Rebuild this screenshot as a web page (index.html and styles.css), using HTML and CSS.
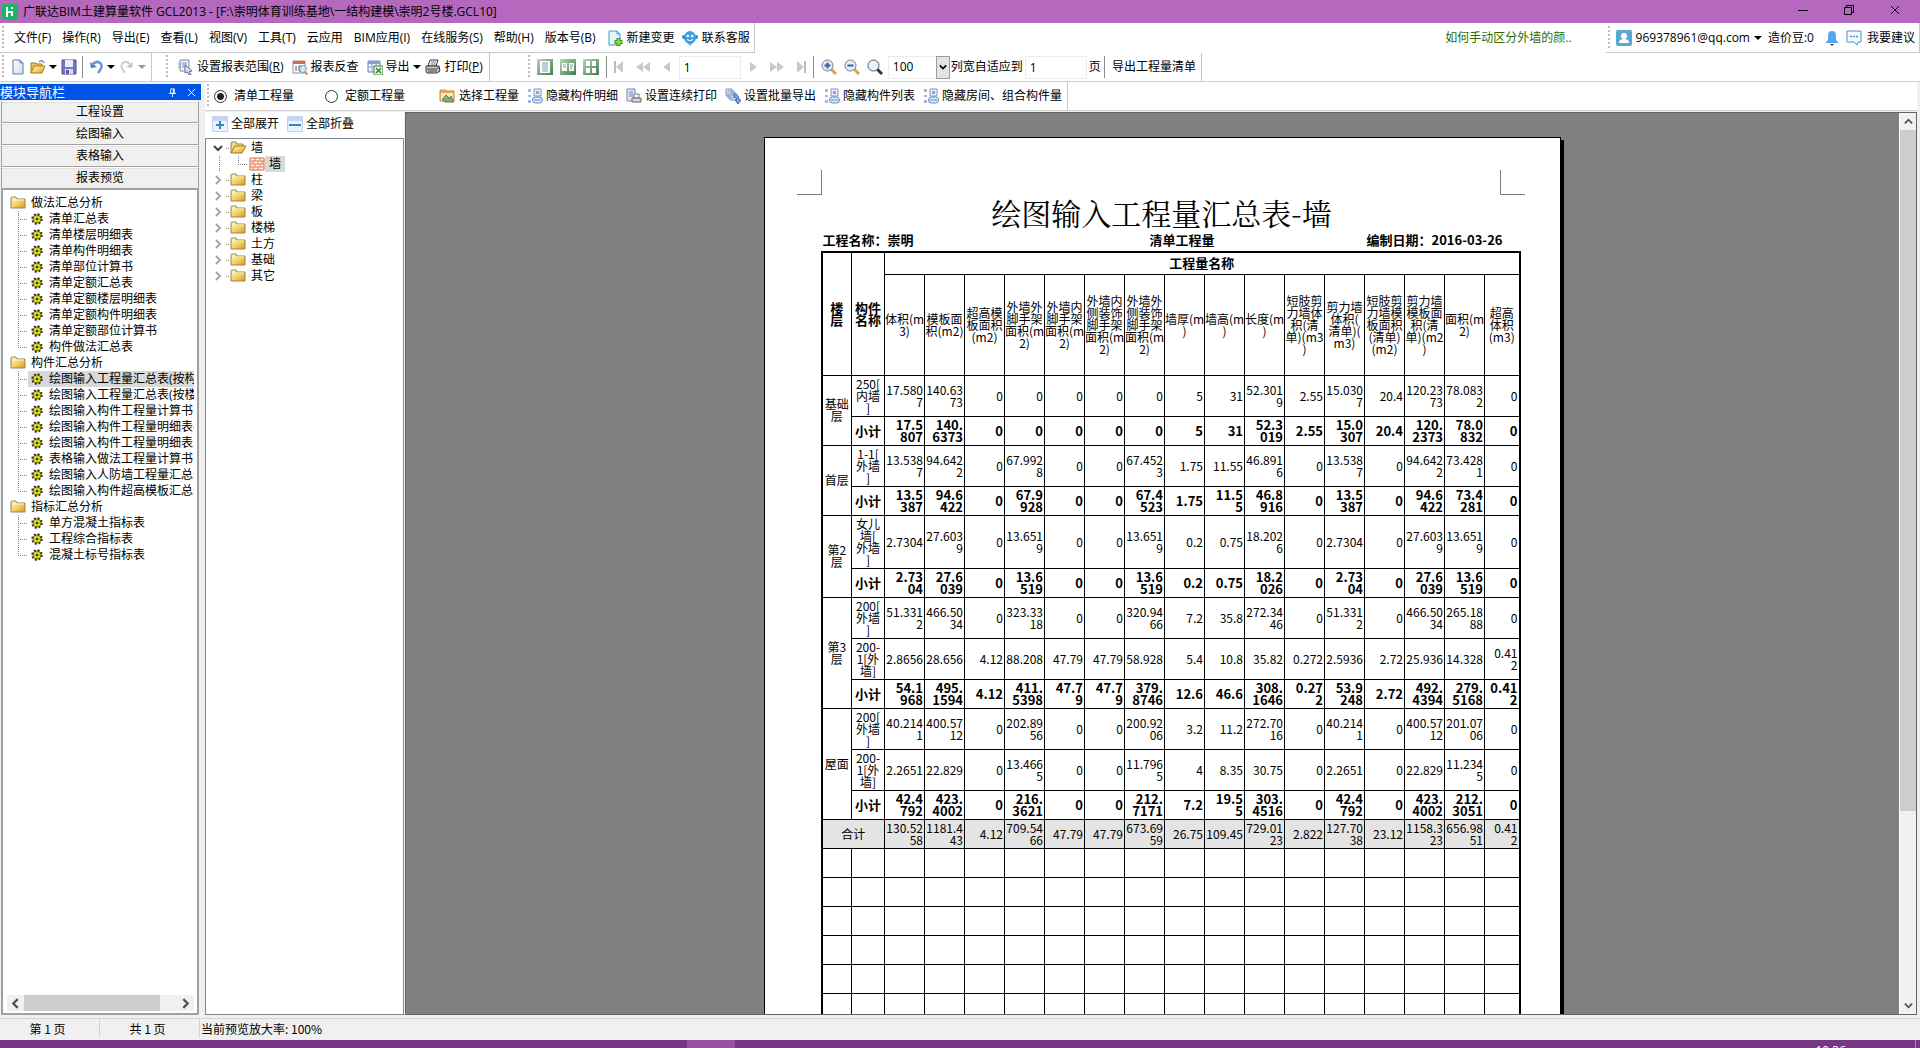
FILE: index.html
```html
<!DOCTYPE html>
<html lang="zh-CN">
<head>
<meta charset="utf-8">
<title>广联达BIM土建算量软件 GCL2013</title>
<link rel="stylesheet" href="styles.css">
</head>
<body>
<svg class="sprite" aria-hidden="true">
  <defs>
    <linearGradient id="gold" x1="0" y1="0" x2="1" y2="1"><stop offset="0" stop-color="#fff3bd"/><stop offset=".5" stop-color="#f6d36b"/><stop offset="1" stop-color="#d99a12"/></linearGradient>
    <linearGradient id="green" x1="0" y1="0" x2="1" y2="1"><stop offset="0" stop-color="#b9d6b2"/><stop offset="1" stop-color="#3f7f4b"/></linearGradient>
    <linearGradient id="sheet" x1="0" y1="0" x2="1" y2="1"><stop offset="0" stop-color="#ffffff"/><stop offset="1" stop-color="#cfdcec"/></linearGradient>
  </defs>
  <symbol id="i-logo" viewBox="0 0 16 16"><rect width="16" height="16" rx="2" fill="#1fb464"/><path d="M5 3v10M5 8h5v4M9 4h2" stroke="#fff" stroke-width="2" fill="none"/></symbol>
  <symbol id="i-new" viewBox="0 0 16 16"><path d="M3 1h7l3 3v11H3z" fill="url(#sheet)" stroke="#5d7fa8"/><path d="M10 1v3h3" fill="none" stroke="#5d7fa8"/></symbol>
  <symbol id="i-addpage" viewBox="0 0 16 16"><path d="M2 1h8l3 3v11H2z" fill="#e6f4fc" stroke="#4a9cc9"/><path d="M10 1v3h3" fill="none" stroke="#4a9cc9"/><path d="M11.500 8v8M7.500 12h8" stroke="#3d9a1c" stroke-width="4"/><path d="M11.500 9v6M8.500 12h6" stroke="#8ddc4c" stroke-width="2"/></symbol>
  <symbol id="i-open" viewBox="0 0 16 16"><path d="M1 14V4h5l1 1h5v3" fill="#e9c15c" stroke="#a97c1e"/><path d="M1 14l3-7h11l-3 7z" fill="url(#gold)" stroke="#a97c1e"/><path d="M9 3q3-3 5 1" stroke="#6c8fc0" fill="none" stroke-width="1.500"/></symbol>
  <symbol id="i-save" viewBox="0 0 16 16"><path d="M1 1h14v14H1z" fill="#7477c0" stroke="#4d4f94"/><path d="M4 1h8v7H4z" fill="#e9edfa"/><path d="M4 10h8v5H4z" fill="#d8dcee"/><path d="M5 11h3v4H5z" fill="#5a5ca4"/></symbol>
  <symbol id="i-undo" viewBox="0 0 16 16"><path d="M2 3l1 6 6-1z" fill="#4a78bd"/><path d="M4 6q4-5 8-2t-2 10" fill="none" stroke="#6795d3" stroke-width="2.500"/></symbol>
  <symbol id="i-redo" viewBox="0 0 16 16"><path d="M14 3l-1 6-6-1z" fill="#c5c5c5"/><path d="M12 6Q8 1 4 4t2 10" fill="none" stroke="#cdcdcd" stroke-width="2"/></symbol>
  <symbol id="i-drop" viewBox="0 0 8 8"><path d="M0 2h8L4 6z" fill="currentColor"/></symbol>
  <symbol id="i-range" viewBox="0 0 16 16"><path d="M3 1h9v11H3z" fill="#eef2fa" stroke="#7b8db0"/><path d="M1 5h3M1 8h3M5 4h5M5 6h5M5 8h3" stroke="#7b8db0"/><path d="M8 6l7 6-3 .5 2 3-2 .5-1.500-3L8 14z" fill="#dfe7f7" stroke="#5c6e9c"/></symbol>
  <symbol id="i-check" viewBox="0 0 16 16"><path d="M1 2h12v12H1z" fill="#fff" stroke="#909090"/><path d="M1 2h12v3H1z" fill="#e0604a"/><path d="M4 7v5M7 7h2v5H7z" stroke="#555" fill="none"/><circle cx="11" cy="10" r="3.500" fill="#cfeaf8" fill-opacity=".8" stroke="#6aa8c9"/><path d="M13 13l2.500 2.500" stroke="#d88a2a" stroke-width="2"/></symbol>
  <symbol id="i-export" viewBox="0 0 16 16"><path d="M1 2h12v11H1z" fill="#e8f0fa" stroke="#6484b4"/><path d="M1 2h12v3H1z" fill="#7da0d6"/><path d="M1 8h12M5 5v8M9 5v8" stroke="#8ca6cc"/><path d="M7 7h9v9H7z" fill="#e7f5e3" stroke="#3c8a3a"/><path d="M9 9l5 5M14 9l-5 5" stroke="#2f8a2f" stroke-width="1.500"/></symbol>
  <symbol id="i-print" viewBox="0 0 16 16"><path d="M5 1h8l-2 6H3z" fill="#fff" stroke="#333"/><path d="M6 3h5M5.500 5h5" stroke="#777"/><path d="M1 7h13l1 5-3 2H2l-1-2z" fill="#c9c9c9" stroke="#333"/><path d="M2 10h10M12 9h2M3 12h9" stroke="#444"/></symbol>
  <symbol id="i-one" viewBox="0 0 16 16"><path d="M0 0h16v16H0z" fill="url(#green)"/><path d="M3 2h10v12H3z" fill="#fff"/><path d="M5 4h6M5 6h6M5 8h6M5 10h6M5 12h6" stroke="#7d9cb8"/></symbol>
  <symbol id="i-two" viewBox="0 0 16 16"><path d="M0 0h16v16H0z" fill="url(#green)"/><path d="M2 4h5v8H2zM9 4h5v8H9z" fill="#fff"/><path d="M3 6h3M3 8h3M10 6h3M10 8h3M10 10h2" stroke="#7d9cb8"/></symbol>
  <symbol id="i-four" viewBox="0 0 16 16"><path d="M0 0h16v16H0z" fill="url(#green)"/><path d="M3 2h4v5H3zM9 2h4v5H9zM3 9h4v5H3zM9 9h4v5H9z" fill="#fff"/></symbol>
  <symbol id="i-first" viewBox="0 0 16 16"><path d="M4 2v12" stroke="#bdbdbd" stroke-width="2"/><path d="M12 2v12L5 8z" fill="#c9c9c9"/></symbol>
  <symbol id="i-rew" viewBox="0 0 16 16"><path d="M8 3v10L1 8zM15 3v10L8 8z" fill="#c9c9c9"/></symbol>
  <symbol id="i-prev" viewBox="0 0 16 16"><path d="M11 3v10L4 8z" fill="#c9c9c9"/></symbol>
  <symbol id="i-next" viewBox="0 0 16 16"><path d="M5 3v10l7-5z" fill="#c9c9c9"/></symbol>
  <symbol id="i-fwd" viewBox="0 0 16 16"><path d="M1 3v10l7-5zM8 3v10l7-5z" fill="#c9c9c9"/></symbol>
  <symbol id="i-last" viewBox="0 0 16 16"><path d="M4 2v12l7-6z" fill="#c9c9c9"/><path d="M12 2v12" stroke="#bdbdbd" stroke-width="2"/></symbol>
  <symbol id="i-zoomin" viewBox="0 0 16 16"><path d="M10 10l5 5" stroke="#d9a54a" stroke-width="3"/><circle cx="6.500" cy="6.500" r="5.500" fill="#e3edf6" stroke="#6c7c8f"/><path d="M3.500 6.500h6M6.500 3.500v6" stroke="#3a5fa0" stroke-width="2"/></symbol>
  <symbol id="i-zoomout" viewBox="0 0 16 16"><path d="M10 10l5 5" stroke="#d9a54a" stroke-width="3"/><circle cx="6.500" cy="6.500" r="5.500" fill="#e3edf6" stroke="#6c7c8f"/><path d="M3.500 6.500h6" stroke="#3a5fa0" stroke-width="2"/></symbol>
  <symbol id="i-lens" viewBox="0 0 16 16"><path d="M10 10l5 5" stroke="#333" stroke-width="3"/><circle cx="6.500" cy="6.500" r="5.500" fill="#e8f4fa" stroke="#4c5a66"/></symbol>
  <symbol id="i-pick" viewBox="0 0 16 16"><path d="M1 13V2h5l1 1h8v10z" fill="#f4c66e" stroke="#c68b2c"/><path d="M2 5h12v8H2z" fill="#fbe9c3"/><path d="M3 12l4-5 3 3 2-2 3 6H6z" fill="#8aa872" stroke="#6d7b50"/><path d="M1 4h14" stroke="#e9823c"/></symbol>
  <symbol id="i-hide" viewBox="0 0 16 16"><path d="M1 1h3v3H1zM1 7h3v2H1zM1 12h3v3H1z" fill="#a9b6d4"/><path d="M7 1h7v7H7z" fill="#e9eefa" stroke="#7e93be"/><path d="M9 3h3v3H9z" fill="#8fa5d3"/><rect x="5.500" y="9" width="10" height="6" rx="3" fill="#dbe9fb" stroke="#5e8cc8"/><path d="M7 12h7" stroke="#5e8cc8"/></symbol>
  <symbol id="i-cont" viewBox="0 0 16 16"><path d="M1 1h8v12H1z" fill="#dfe7f7" stroke="#7388b8"/><path d="M3 4h4M3 6h4M3 8h4" stroke="#7388b8"/><path d="M8 6h5v4H8z" fill="#fff" stroke="#777"/><path d="M6 10h9v4H6z" fill="#d6d6d6" stroke="#666"/></symbol>
  <symbol id="i-batch" viewBox="0 0 16 16"><path d="M1 1h6v7H1zM3 3h6v7H3zM5 5h6v7H5z" fill="#e4ebfa" stroke="#7d95cb"/><path d="M9 6q5 0 5 6h2l-3 4-3-4h2q0-3-3-3z" fill="#82a6e0" stroke="#4667ad"/></symbol>
  <symbol id="i-plus" viewBox="0 0 16 16"><path d="M.5.500h15v15H.500z" fill="#eaf1ff" stroke="#c3cff1"/><path d="M1 1h14v4H1z" fill="#c8d4f8"/><path d="M8 5v8M4 9h8" stroke="#2d8ac7" stroke-width="2"/></symbol>
  <symbol id="i-minus" viewBox="0 0 16 16"><path d="M.5.500h15v15H.500z" fill="#eaf1ff" stroke="#c3cff1"/><path d="M1 1h14v4H1z" fill="#c8d4f8"/><path d="M2 9h12" stroke="#2d8ac7" stroke-width="2"/></symbol>
  <symbol id="i-folder" viewBox="0 0 16 16"><path d="M1 13V3q0-1 1-1h4l1 2h8v9z" fill="url(#gold)" stroke="#97845a"/><path d="M2 5h12" stroke="#fff6d0"/></symbol>
  <symbol id="i-folder-open" viewBox="0 0 16 16"><path d="M1 13V3q0-1 1-1h4l1 2h6v3" fill="#f3d88a" stroke="#97845a"/><path d="M1 13l4-7h11l-4 7z" fill="url(#gold)" stroke="#a4741a"/></symbol>
  <symbol id="i-gear" viewBox="0 0 12 12"><circle cx="6" cy="6" r="4.500" fill="none" stroke="#222" stroke-width="2.400" stroke-dasharray="1.800 1.740"/><circle cx="6" cy="6" r="4" fill="#f2ee10" stroke="#444400" stroke-width=".8"/><path d="M6 3.500v1M6 7.500v1M3.500 6h1M7.500 6h1" stroke="#222"/><circle cx="6" cy="6" r="1" fill="#111"/></symbol>
  <symbol id="i-brick" viewBox="0 0 16 14"><path d="M1 1h14v12H1z" fill="#fff3e8" stroke="#d9673a"/><path d="M1 4h14M1 7h14M1 10h14M6 1v3M11 1v3M4 4v3M9 4v3M13 4v3M6 7v3M11 7v3M4 10v3M9 10v3" stroke="#e07f52" fill="none"/></symbol>
  <symbol id="i-robot" viewBox="0 0 16 16"><circle cx="2" cy="7" r="2" fill="#2e86c4"/><circle cx="14" cy="7" r="2" fill="#2e86c4"/><ellipse cx="8" cy="7.500" rx="6" ry="6.500" fill="#3aa2e0"/><path d="M6 13h4l-2 3z" fill="#3aa2e0"/><circle cx="5.800" cy="6" r="1.300" fill="#fff"/><circle cx="10.200" cy="6" r="1.300" fill="#fff"/><path d="M5 9.500q3 2.500 6 0" stroke="#fff" fill="none"/></symbol>
  <symbol id="i-user" viewBox="0 0 16 16"><rect width="16" height="16" rx="2" fill="#58a8cf"/><circle cx="8" cy="6" r="3" fill="#fff"/><path d="M3 13q0-4 5-4t5 4z" fill="#fff"/></symbol>
  <symbol id="i-bell" viewBox="0 0 14 16"><path d="M7 1q4 0 4 5v4l3 3H0l3-3V6q0-5 4-5z" fill="#56a4f4"/><path d="M5 14h4l-2 2z" fill="#3a3a3a"/></symbol>
  <symbol id="i-chat" viewBox="0 0 16 16"><path d="M1 1h14v11h-3l-1 3-3-3H1z" fill="#f6fbff" stroke="#4a90d2"/><path d="M4 6.500h2M7 6.500h2M10 6.500h2" stroke="#4a90d2" stroke-width="1.500"/></symbol>
  <symbol id="i-right" viewBox="0 0 10 10"><path d="M3 1l4 4-4 4" fill="none" stroke="currentColor" stroke-width="2"/></symbol>
  <symbol id="i-left" viewBox="0 0 10 10"><path d="M7 1L3 5l4 4" fill="none" stroke="currentColor" stroke-width="2"/></symbol>
  <symbol id="i-down" viewBox="0 0 10 10"><path d="M1 3l4 4 4-4" fill="none" stroke="currentColor" stroke-width="2"/></symbol>
  <symbol id="i-up" viewBox="0 0 10 10"><path d="M1 7l4-4 4 4" fill="none" stroke="currentColor" stroke-width="2"/></symbol>
  <symbol id="i-close" viewBox="0 0 10 10"><path d="M1 1l8 8M9 1L1 9" fill="none" stroke="currentColor"/></symbol>
  <symbol id="i-pin" viewBox="0 0 10 10"><path d="M3 1h4v5H3zM6 1v5M1 6h8M5 6v4" fill="none" stroke="currentColor"/></symbol>
  <symbol id="i-min" viewBox="0 0 10 10"><path d="M0 5.500h10" stroke="currentColor"/></symbol>
  <symbol id="i-restore" viewBox="0 0 10 10"><path d="M.5 2.500h7v7h-7zM2.500 2V.500h7v7H8" fill="none" stroke="currentColor"/></symbol>
</svg>

<header class="titlebar">
  <svg class="icon"><use href="#i-logo"/></svg>
  <h1 class="app-title">广联达BIM土建算量软件 GCL2013 - [F:\崇明体育训练基地\一结构建模\崇明2号楼.GCL10]</h1>
  <div class="window-controls">
    <button aria-label="最小化"><svg><use href="#i-min"/></svg></button>
    <button aria-label="还原"><svg><use href="#i-restore"/></svg></button>
    <button aria-label="关闭"><svg><use href="#i-close"/></svg></button>
  </div>
</header>

<div class="menu-row">
  <nav class="strip menu">
    <button>文件(F)</button><button>操作(R)</button><button>导出(E)</button><button>查看(L)</button><button>视图(V)</button><button>工具(T)</button><button>云应用</button><button>BIM应用(I)</button><button>在线服务(S)</button><button>帮助(H)</button><button>版本号(B)</button>
    <button class="with-icon"><svg class="icon"><use href="#i-addpage"/></svg>新建变更</button>
    <button class="with-icon service"><svg class="icon"><use href="#i-robot"/></svg>联系客服</button>
  </nav>
  <a class="tip" href="#">如何手动区分外墙的颜..</a>
  <div class="strip account">
    <button class="with-icon"><svg class="icon"><use href="#i-user"/></svg>969378961@qq.com<svg class="arrow"><use href="#i-drop"/></svg></button>
    <span class="beans">造价豆:0</span>
    <button aria-label="通知" class="bell"><svg class="icon"><use href="#i-bell"/></svg></button>
    <button class="with-icon"><svg class="icon wide"><use href="#i-chat"/></svg>我要建议</button>
  </div>
</div>

<div class="tool-row">
  <div class="strip file-tools">
    <button aria-label="新建"><svg class="icon"><use href="#i-new"/></svg></button>
    <button aria-label="打开" class="split"><svg class="icon"><use href="#i-open"/></svg><svg class="arrow"><use href="#i-drop"/></svg></button>
    <button aria-label="保存"><svg class="icon"><use href="#i-save"/></svg></button>
    <span class="sep"></span>
    <button aria-label="撤销" class="split"><svg class="icon"><use href="#i-undo"/></svg><svg class="arrow"><use href="#i-drop"/></svg></button>
    <button aria-label="恢复" class="split off"><svg class="icon"><use href="#i-redo"/></svg><svg class="arrow"><use href="#i-drop"/></svg></button>
  </div>
  <div class="strip report-tools">
    <button class="with-icon"><svg class="icon wide"><use href="#i-range"/></svg><span>设置报表范围(<u>R</u>)</span></button>
    <button class="with-icon"><svg class="icon"><use href="#i-check"/></svg>报表反查</button>
    <button class="with-icon"><svg class="icon"><use href="#i-export"/></svg>导出<svg class="arrow"><use href="#i-drop"/></svg></button>
    <button class="with-icon print"><svg class="icon wide"><use href="#i-print"/></svg><span>打印(<u>P</u>)</span></button>
  </div>
  <div class="strip page-tools">
    <button aria-label="单页"><svg class="icon"><use href="#i-one"/></svg></button>
    <button aria-label="双页"><svg class="icon"><use href="#i-two"/></svg></button>
    <button aria-label="四页"><svg class="icon"><use href="#i-four"/></svg></button>
    <span class="sep"></span>
    <div class="pager">
      <button aria-label="首页"><svg class="icon"><use href="#i-first"/></svg></button>
      <button aria-label="快退"><svg class="icon"><use href="#i-rew"/></svg></button>
      <button aria-label="上一页"><svg class="icon"><use href="#i-prev"/></svg></button>
    </div>
    <input class="box" aria-label="页码" value="1">
    <div class="pager">
      <button aria-label="下一页"><svg class="icon"><use href="#i-next"/></svg></button>
      <button aria-label="快进"><svg class="icon"><use href="#i-fwd"/></svg></button>
      <button aria-label="末页"><svg class="icon"><use href="#i-last"/></svg></button>
    </div>
    <span class="sep"></span>
    <button aria-label="放大"><svg class="icon"><use href="#i-zoomin"/></svg></button>
    <button aria-label="缩小"><svg class="icon"><use href="#i-zoomout"/></svg></button>
    <button aria-label="适合"><svg class="icon"><use href="#i-lens"/></svg></button>
    <div class="combo"><select class="box" aria-label="缩放比例"><option>100</option></select><span class="combo-btn"><svg><use href="#i-down"/></svg></span></div>
    <label class="fit">列宽自适应到<input class="box" value="1">页</label>
    <span class="sep"></span>
    <button class="list-out">导出工程量清单</button>
  </div>
</div>

<main class="workspace">
  <aside class="dock">
    <div class="dock-title"><h2>模块导航栏</h2><button aria-label="固定"><svg><use href="#i-pin"/></svg></button><button aria-label="关闭"><svg><use href="#i-close"/></svg></button></div>
    <div class="dock-tabs"><button>工程设置</button><button>绘图输入</button><button>表格输入</button><button>报表预览</button></div>
    <div class="dock-tree">
      <ul class="tree" id="report-tree"></ul>
      <div class="hscroll"><svg><use href="#i-left"/></svg><div class="hthumb"></div><svg><use href="#i-right"/></svg></div>
    </div>
  </aside>

  <section class="content">
    <div class="option-row">
      <div class="strip options">
        <label class="radio"><input type="radio" name="kind" checked>清单工程量</label>
        <label class="radio second"><input type="radio" name="kind">定额工程量</label>
        <button class="with-icon"><svg class="icon wide"><use href="#i-pick"/></svg>选择工程量</button>
        <button class="with-icon"><svg class="icon"><use href="#i-hide"/></svg>隐藏构件明细</button>
        <button class="with-icon"><svg class="icon"><use href="#i-cont"/></svg>设置连续打印</button>
        <button class="with-icon"><svg class="icon"><use href="#i-batch"/></svg>设置批量导出</button>
        <button class="with-icon"><svg class="icon"><use href="#i-hide"/></svg>隐藏构件列表</button>
        <button class="with-icon"><svg class="icon"><use href="#i-hide"/></svg>隐藏房间、组合构件量</button>
      </div>
    </div>
    <div class="panes">
      <div class="parts">
        <div class="parts-bar">
          <button><svg class="icon"><use href="#i-plus"/></svg>全部展开</button>
          <button><svg class="icon"><use href="#i-minus"/></svg>全部折叠</button>
        </div>
        <ul class="parts-tree">
          <li><svg class="twist open"><use href="#i-down"/></svg><span class="dots"></span><svg class="icon"><use href="#i-folder-open"/></svg>墙</li>
          <li class="sub"><span class="rail"></span><span class="branch last"></span><span class="picked"><svg class="icon"><use href="#i-brick"/></svg><b>墙</b></span></li>
          <li><svg class="twist"><use href="#i-right"/></svg><span class="dots"></span><svg class="icon"><use href="#i-folder"/></svg>柱</li>
          <li><svg class="twist"><use href="#i-right"/></svg><span class="dots"></span><svg class="icon"><use href="#i-folder"/></svg>梁</li>
          <li><svg class="twist"><use href="#i-right"/></svg><span class="dots"></span><svg class="icon"><use href="#i-folder"/></svg>板</li>
          <li><svg class="twist"><use href="#i-right"/></svg><span class="dots"></span><svg class="icon"><use href="#i-folder"/></svg>楼梯</li>
          <li><svg class="twist"><use href="#i-right"/></svg><span class="dots"></span><svg class="icon"><use href="#i-folder"/></svg>土方</li>
          <li><svg class="twist"><use href="#i-right"/></svg><span class="dots"></span><svg class="icon"><use href="#i-folder"/></svg>基础</li>
          <li><svg class="twist"><use href="#i-right"/></svg><span class="dots"></span><svg class="icon"><use href="#i-folder"/></svg>其它</li>
        </ul>
      </div>
      <div class="preview">
        <div class="canvas">
          <article class="paper">
            <div class="marks"><span class="mark left"></span><span class="mark right"></span></div>
            <h2 class="report-title">绘图输入工程量汇总表-墙</h2>
            <div class="report-meta"><span>工程名称：崇明</span><span>清单工程量</span><span>编制日期：2016-03-26</span></div>
            <table class="report">
              <colgroup><col class="c-floor"><col class="c-part"><col span="15" class="c-num"><col class="c-last"></colgroup>
              <thead id="report-head"></thead>
              <tbody id="report-body"></tbody>
            </table>
          </article>
        </div>
        <div class="vscroll"><svg><use href="#i-up"/></svg><div class="vthumb"></div><svg><use href="#i-down"/></svg></div>
      </div>
    </div>
  </section>
</main>

<footer class="statusbar"><span class="cell">第 1 页</span><span class="cell">共 1 页</span><span class="rate">当前预览放大率: 100%</span></footer>
<div class="taskbar"><span class="task-active"></span><span class="clock">10:36</span><span class="peek"></span></div>
<script src="app.js"></script>
</body>
</html>
```

FILE: styles.css
```css
* { box-sizing: border-box; }
body {
  margin: 0;
  height: 100vh;
  display: flex;
  flex-direction: column;
  overflow: hidden;
  background: #f0f0f0;
  color: #000;
  font: 12px/16px "Open Sans", "Noto Sans CJK SC", sans-serif;
}
button {
  font: inherit; color: inherit; background: none; border: 0; padding: 0; margin: 0;
  display: flex; align-items: center; white-space: nowrap;
}
h1, h2 { margin: 0; font: inherit; }
ul { margin: 0; padding: 0; list-style: none; }
svg { display: block; flex: none; }
.sprite { position: absolute; width: 0; height: 0; }
.icon { width: 16px; height: 16px; }
.icon.wide { width: 18px; }
.arrow { width: 8px; height: 8px; }

/* title bar */
.titlebar { display: flex; align-items: center; height: 23px; flex: none; padding-left: 2px; background: #b469be; gap: 5px; }
.app-title { flex: 1; white-space: nowrap; }
.window-controls { display: flex; gap: 36px; padding: 0 20px 4px 0; }
.window-controls svg { width: 10px; height: 10px; }

/* toolbar strips */
.strip { display: flex; align-items: center; align-self: stretch; border-right: 1px solid #c8c8c8; white-space: nowrap; }
.strip::before {
  content: ""; width: 2px; height: 24px; margin: 0 8px 0 2px; flex: none;
  background: repeating-linear-gradient(#bdbdbd 0 2px, transparent 2px 4px);
}
.sep { width: 1px; height: 22px; background: #8c8c8c; flex: none; }
.menu-row { display: flex; height: 30px; flex: none; background: #fff; }
.menu { gap: 11px; padding-right: 4px; border-bottom: 1px solid #c8c8c8; }
.menu::before { margin-right: -1px; }
.menu .with-icon { gap: 4px; }
.menu .service { margin-left: -4px; }
.tip { margin-left: auto; margin-right: 34px; align-self: center; color: #2f6b00; text-decoration: none; }
.account { border-bottom: 1px solid #c8c8c8; padding-right: 4px; }
.account::before { margin-right: 6px; }
.account .with-icon { gap: 4px; }
.beans { margin: 0 10px 0 6px; }
.bell { margin-right: 5px; }
.tool-row { display: flex; height: 29px; flex: none; background: #fff; border-bottom: 1px solid #d0d0d0; }
.file-tools { gap: 4px; width: 152px; }
.file-tools::before { margin-right: 2px; }
.split { gap: 3px; }
.file-tools .sep { margin: 0 1px; }
.off { color: #9a9a9a; }
.report-tools { margin-left: 12px; padding-right: 6px; gap: 8px; }
.report-tools::before { margin-right: 0; }
.report-tools .with-icon { gap: 3px; }
.report-tools .print { margin-left: -5px; }
.page-tools { margin-left: 36px; padding-right: 5px; gap: 7px; }
.page-tools::before { margin-right: 0; }
.pager { display: flex; gap: 8px; margin: 0 -3px; }
.box {
  width: 62px; height: 23px; padding: 0 4px; border: 1px solid #ececec; border-radius: 0;
  background: #fff; font: inherit; color: inherit; appearance: none;
}
.combo { position: relative; display: flex; margin-left: -2px; }
.combo-btn {
  position: absolute; right: 0; top: 0; width: 14px; height: 23px; pointer-events: none;
  display: flex; align-items: center; justify-content: center; background: #e4e4e4; border: 1px solid #9c9c9c;
}
.combo-btn svg { width: 8px; height: 8px; }
.fit { display: flex; align-items: center; gap: 2px; margin: 0 -4px 0 -6px; }

/* workspace */
.workspace { flex: 1; min-height: 0; display: flex; padding-bottom: 3px; border-bottom: 1px solid #d4d4d4; }
.dock { width: 201px; flex: none; display: flex; flex-direction: column; padding-top: 2px; }
.dock-title { display: flex; align-items: center; height: 16px; gap: 10px; padding-right: 5px; background: #0054e3; color: #fff; }
.dock-title h2 { flex: 1; font-size: 13px; }
.dock-title svg { width: 9px; height: 9px; }
.dock-tabs { margin-top: 1px; padding: 0 2px 0 1px; }
.dock-tabs button {
  width: 100%; height: 22px; justify-content: center; background: #f0f0f0;
  border: 1px solid #a0a0a0; border-top-color: #fff; box-shadow: inset 0 1px 0 #e0e0e0;
}
.dock-tree {
  flex: 1; min-height: 0; margin: 0 2px 0 1px; display: flex; flex-direction: column; justify-content: space-between;
  background: #fff; border: 2px solid #a0a0a0; border-top-width: 1px; padding: 5px 3px 2px 4px; overflow: hidden;
}
.tree li, .parts-tree li { display: flex; align-items: center; height: 16px; white-space: nowrap; overflow: hidden; }
.tree .group { gap: 5px; padding-left: 3px; }
.tree .leaf { padding-left: 11px; }
.tree .leaf .name { display: flex; align-items: center; flex: 1; gap: 6px; padding-left: 3px; height: 16px; overflow: hidden; }
.tree .leaf .name svg { width: 12px; height: 12px; }
.tree .selected .name { background: #d9d9d9; }
.branch {
  width: 10px; height: 16px; flex: none;
  background:
    repeating-linear-gradient(#808080 0 1px, transparent 1px 2px) 0 0 / 1px 16px no-repeat,
    repeating-linear-gradient(90deg, #808080 0 1px, transparent 1px 2px) 0 8px / 10px 1px no-repeat;
}
.branch.last { background-size: 1px 8px, 10px 1px; }
.hscroll { display: flex; align-items: center; height: 16px; background: #f0f0f0; color: #505050; padding: 0 3px; }
.hscroll svg { width: 11px; height: 11px; }
.hthumb { height: 16px; width: 136px; margin: 0 auto 0 3px; background: #cdcdcd; }

.content { flex: 1; min-width: 0; display: flex; flex-direction: column; margin-left: 4px; padding-right: 3px; }
.option-row { display: flex; height: 29px; background: #fff; border-bottom: 1px solid #d0d0d0; }
.options { padding-right: 5px; gap: 8px; }
.options::before { margin: 0 -3px 0 2px; }
.options .with-icon { gap: 3px; }
.radio { display: flex; align-items: center; gap: 7px; }
.radio input {
  appearance: none; width: 13px; height: 13px; margin: 0; border: 1px solid #333; border-radius: 50%; background: #fff;
}
.radio input:checked { background: radial-gradient(#222 0 3px, #fff 4px); }
.radio.second { margin: 0 25px 0 23px; }
.panes { flex: 1; min-height: 0; display: flex; gap: 1px; padding-top: 1px; }
.parts { width: 199px; flex: none; display: flex; flex-direction: column; background: #fff; }
.parts-bar { display: flex; gap: 8px; height: 26px; padding: 0 0 2px 7px; align-items: center; }
.parts-bar button { gap: 3px; }
.parts-tree { flex: 1; border: 1px solid #828790; padding: 1px 0 0 7px; }
.parts-tree .twist { width: 10px; height: 10px; color: #a6a6a6; margin-right: 3px; }
.parts-tree .twist.open { color: #404040; }
.dots { width: 4px; height: 1px; background: repeating-linear-gradient(90deg, #808080 0 1px, transparent 1px 2px); }
.parts-tree .icon { margin-right: 5px; }
.sub .rail { width: 1px; height: 16px; margin: 0 18px 0 6px; background: repeating-linear-gradient(#808080 0 1px, transparent 1px 2px); }
.picked { display: flex; align-items: center; margin-left: 1px; }
.parts-tree .picked .icon { margin: 0; }
.picked b { font-weight: 400; padding: 0 4px; background: #d9d9d9; }

.preview { flex: 1; min-width: 0; display: flex; background: #808080; border: 1px solid #646464; }
.canvas { flex: 1; overflow: hidden; padding-left: 19px; }
.paper {
  width: 797px; margin: 24px auto 0; padding-bottom: 80px; background: #fff; border: 1px solid #000;
  box-shadow: 3px 3px 0 #000; font-family: "Noto Sans CJK SC", sans-serif;
}
.marks { display: flex; justify-content: space-between; padding: 32px 35px 0 32px; }
.mark { width: 25px; height: 25px; border-bottom: 1px solid #808080; }
.mark.left { border-right: 1px solid #808080; }
.mark.right { border-left: 1px solid #808080; }
.report-title { margin: 0 57px 0 56px; text-align: center; font: 30px/34px "Noto Serif CJK SC", "Noto Sans CJK SC", serif; }
.report-meta { display: grid; grid-template-columns: 327px 217px 1fr; margin-left: 58px; font-weight: 700; font-size: 13px; line-height: 22px; }
.report { width: 698px; margin-left: 56px; table-layout: fixed; border-collapse: collapse; border: 2px solid #000; line-height: 12px; }
.c-floor { width: 30px; }
.c-part { width: 33px; }
.c-num { width: 40px; }
.c-last { width: 35px; }
.report th, .report td { border: 1px solid #000; padding: 0; font-weight: 400; text-align: center; vertical-align: middle; white-space: nowrap; }
.report td { text-align: right; padding-right: 1px; }
.report .strong th, .report .strong td, .report .strong-cell { font-weight: 700; font-size: 13px; }
.r-top { height: 22px; }
.r-head { height: 101px; }
.r3 { height: 41px; }
.r4 { height: 53px; }
.r2 { height: 29px; }
.total { background: #e4e4e4; }

.vscroll { width: 17px; display: flex; flex-direction: column; align-items: center; background: #f0f0f0; border-left: 1px solid #fff; color: #505050; padding: 3px 0; }
.vscroll svg { width: 9px; height: 11px; }
.vthumb { width: 100%; height: 681px; margin: 3px 0 auto; background: #cdcdcd; }

/* bottom bars */
.statusbar { display: flex; height: 21px; flex: none; align-items: center; padding-bottom: 2px; font-family: "Noto Sans CJK SC", sans-serif; }
.statusbar .cell { width: 100px; text-align: center; border-right: 1px solid #d4d4d4; padding-right: 4px; line-height: 19px; word-spacing: normal; }
.rate { padding-left: 1px; }
.taskbar { display: flex; height: 8px; flex: none; overflow: hidden; background: #773684; color: #fff; }
.task-active { width: 48px; margin-left: 687px; background: #9650a4; }
.clock { margin-left: auto; padding: 3px 69px 0 0; }
.peek { width: 1px; margin-right: 4px; background: #b48abc; }
```

FILE: app.js
```js
const groups = [
  ["做法汇总分析", ["清单汇总表", "清单楼层明细表", "清单构件明细表", "清单部位计算书", "清单定额汇总表", "清单定额楼层明细表", "清单定额构件明细表", "清单定额部位计算书", "构件做法汇总表"]],
  ["构件汇总分析", ["绘图输入工程量汇总表(按构件)", "绘图输入工程量汇总表(按楼层)", "绘图输入构件工程量计算书", "绘图输入构件工程量明细表-", "绘图输入构件工程量明细表.", "表格输入做法工程量计算书", "绘图输入人防墙工程量汇总表", "绘图输入构件超高模板汇总表"]],
  ["指标汇总分析", ["单方混凝土指标表", "工程综合指标表", "混凝土标号指标表"]]
];
document.getElementById("report-tree").innerHTML = groups.map(([title, items], g) =>
  `<li class="group"><svg class="icon"><use href="#i-folder"/></svg>${title}</li>` +
  items.map((name, i) =>
    `<li class="leaf${g === 1 && i === 0 ? " selected" : ""}"><span class="branch${i === items.length - 1 ? " last" : ""}"></span>` +
    `<span class="name"><svg><use href="#i-gear"/></svg>${name}</span></li>`).join("")
).join("");

const lines = text => text.split("/").join("<br>");
const heads = [
  "体积(m/3)", "模板面/积(m2)", "超高模/板面积/(m2)", "外墙外/脚手架/面积(m/2)", "外墙内/脚手架/面积(m/2)",
  "外墙内/侧装饰/脚手架/面积(m/2)", "外墙外/侧装饰/脚手架/面积(m/2)", "墙厚(m/)", "墙高(m/)", "长度(m/)",
  "短肢剪/力墙体/积(清/单)(m3/)", "剪力墙/体积(/清单)(/m3)", "短肢剪/力墙模/板面积/(清单)/(m2)",
  "剪力墙/模板面/积(清/单)(m2/)", "面积(m/2)", "超高/体积/(m3)"
];
document.getElementById("report-head").innerHTML =
  `<tr class="r-top"><th rowspan="2" class="strong-cell">楼<br>层</th><th rowspan="2" class="strong-cell">构件<br>名称</th>` +
  `<th colspan="16" class="strong-cell">工程量名称</th></tr>` +
  `<tr class="r-head">${heads.map(h => `<th>${lines(h)}</th>`).join("")}</tr>`;

// [floor label, [row kind, part label, values]...]
const floors = [
  ["基础/层",
    ["r3", "250[/内墙/]", "17.5807 140.6373 0 0 0 0 0 5 31 52.3019 2.55 15.0307 20.4 120.2373 78.0832 0"],
    ["sum", "小计", "17.5807 140.6373 0 0 0 0 0 5 31 52.3019 2.55 15.0307 20.4 120.2373 78.0832 0"]],
  ["首层",
    ["r3", "1-1[/外墙/]", "13.5387 94.6422 0 67.9928 0 0 67.4523 1.75 11.55 46.8916 0 13.5387 0 94.6422 73.4281 0"],
    ["sum", "小计", "13.5387 94.6422 0 67.9928 0 0 67.4523 1.75 11.55 46.8916 0 13.5387 0 94.6422 73.4281 0"]],
  ["第2/层",
    ["r4", "女儿/墙[/外墙/]", "2.7304 27.6039 0 13.6519 0 0 13.6519 0.2 0.75 18.2026 0 2.7304 0 27.6039 13.6519 0"],
    ["sum", "小计", "2.7304 27.6039 0 13.6519 0 0 13.6519 0.2 0.75 18.2026 0 2.7304 0 27.6039 13.6519 0"]],
  ["第3/层",
    ["r3", "200[/外墙/]", "51.3312 466.5034 0 323.3318 0 0 320.9466 7.2 35.8 272.3446 0 51.3312 0 466.5034 265.1888 0"],
    ["r3", "200-/1[外/墙]", "2.8656 28.656 4.12 88.208 47.79 47.79 58.928 5.4 10.8 35.82 0.272 2.5936 2.72 25.936 14.328 0.412"],
    ["sum", "小计", "54.1968 495.1594 4.12 411.5398 47.79 47.79 379.8746 12.6 46.6 308.1646 0.272 53.9248 2.72 492.4394 279.5168 0.412"]],
  ["屋面",
    ["r3", "200[/外墙/]", "40.2141 400.5712 0 202.8956 0 0 200.9206 3.2 11.2 272.7016 0 40.2141 0 400.5712 201.0706 0"],
    ["r3", "200-/1[外/墙]", "2.2651 22.829 0 13.4665 0 0 11.7965 4 8.35 30.75 0 2.2651 0 22.829 11.2345 0"],
    ["sum", "小计", "42.4792 423.4002 0 216.3621 0 0 212.7171 7.2 19.55 303.4516 0 42.4792 0 423.4002 212.3051 0"]]
];
const totals = "130.5258 1181.443 4.12 709.5466 47.79 47.79 673.6959 26.75 109.45 729.0123 2.822 127.7038 23.12 1158.323 656.9851 0.412";

// Numbers wrap by character count: six in a plain cell, four in a bold or narrow one.
const cells = (values, bold) => values.split(" ").map((v, i) => {
  const size = bold || i === 15 ? 4 : 6;
  return `<td>${v.match(new RegExp(`.{1,${size}}`, "g")).join("<br>")}</td>`;
}).join("");

let body = "";
for (const [floor, ...rows] of floors) {
  rows.forEach(([kind, part, values], i) => {
    const sum = kind === "sum";
    const head = i === 0 ? `<th rowspan="${rows.length}">${lines(floor)}</th>` : "";
    body += `<tr class="${sum ? "r2 strong" : kind}">${head}<th>${lines(part)}</th>${cells(values, sum)}</tr>`;
  });
}
body += `<tr class="r2 total"><th colspan="2">合计</th>${cells(totals, false)}</tr>`;
for (let i = 0; i < 8; i++) body += `<tr class="r2">${"<td></td>".repeat(18)}</tr>`;
document.getElementById("report-body").innerHTML = body;
```
